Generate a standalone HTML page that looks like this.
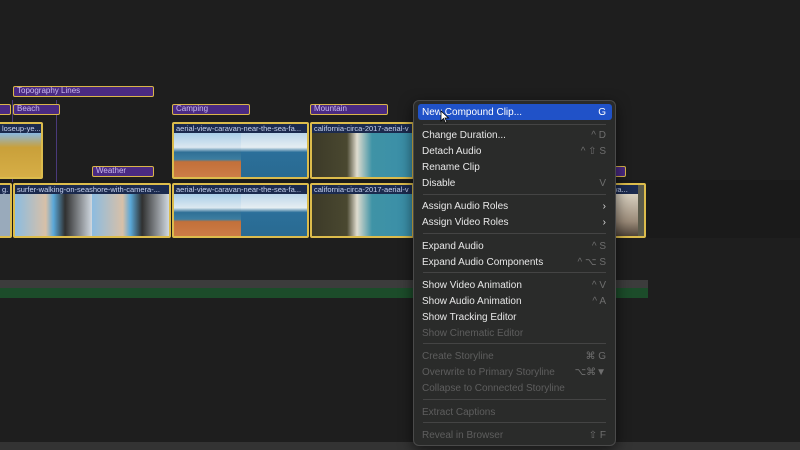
<!DOCTYPE html>
<html><head><style>
*{margin:0;padding:0;box-sizing:border-box}
body{width:800px;height:450px;background:#1e1e1e;position:relative;overflow:hidden;font-family:"Liberation Sans",sans-serif}
.a{position:absolute}
.lab{position:absolute;height:11px;background:#4a2a82;border:1.5px solid #d9b54a;border-radius:2px;color:#c9b8f0;font-size:8px;line-height:8px;height:11px;padding-left:3px;white-space:nowrap;overflow:hidden}
.clip{position:absolute;border:2px solid #dcbc4c;border-radius:2px;overflow:hidden;background:#333}
.clip .t{height:9px;background:#1b2a4e;color:#c8d4f0;font-size:7.5px;line-height:9px;padding-left:2px;white-space:nowrap;overflow:hidden}
.beach{background:linear-gradient(#a9cde8 0%,#dce8f0 30%,#2f6f96 40%,#3d7ea0 55%,#c2703a 60%,#d0804a 100%)}
.sea{background:linear-gradient(#bcd6ea 0%,#e6eef2 30%,#2b6f9a 40%,#2a6a90 100%)}
.cal{background:linear-gradient(90deg,#3c3a28 0%,#4a4830 35%,#e0dccf 45%,#3f93a6 60%,#3a8ea8 100%)}
.surf{background:linear-gradient(90deg,#8cbce0 0%,#d8c0a8 40%,#5aa8d8 50%,#303030 65%,#d0d8e0 100%)}
.menu{position:absolute;left:413px;top:100px;width:203px;height:346px;background:#2a2b2a;border:1px solid #4a4a4a;border-radius:6px;box-shadow:0 4px 14px rgba(0,0,0,.6)}
.it{position:absolute;left:8px;font-size:10px;color:#e8e8e8;white-space:nowrap;margin-top:1px}
.k{position:absolute;right:9px;font-size:10px;color:#6e6e6e;white-space:nowrap;margin-top:1px}
.d{color:#5e5e5e}
.sep{position:absolute;left:9px;right:9px;height:1px;background:#444}
</style></head><body>
<div class="a" style="left:0;top:180px;width:800px;height:58px;background:#1a1a1a"></div>
<div class="a" style="left:0;top:280px;width:648px;height:8px;background:#3c3c3c"></div>
<div class="a" style="left:0;top:288px;width:648px;height:10px;background:#1c4c2a"></div>
<div class="a" style="left:0;top:442px;width:800px;height:8px;background:#333"></div>
<div class="a" style="left:56px;top:100px;width:1px;height:82px;background:#4a3a7a"></div>
<div class="a" style="left:12px;top:100px;width:1px;height:82px;background:#4a3a7a"></div>

<div class="lab" style="left:13px;top:86px;width:141px">Topography Lines</div>
<div class="lab" style="left:-3px;top:104px;width:14px"></div>
<div class="lab" style="left:13px;top:104px;width:47px">Beach</div>
<div class="lab" style="left:172px;top:104px;width:78px">Camping</div>
<div class="lab" style="left:310px;top:104px;width:78px">Mountain</div>
<div class="lab" style="left:92px;top:166px;width:62px">Weather</div>
<div class="lab" style="left:612px;top:166px;width:14px"></div>

<div class="clip" style="left:-2px;top:122px;width:45px;height:57px"><div class="t">loseup-ye...</div><div style="height:48px;background:linear-gradient(#8ab8e0,#c9a03a 30%,#d8b048 100%)"></div></div>
<div class="clip" style="left:172px;top:122px;width:137px;height:57px"><div class="t">aerial-view-caravan-near-the-sea-fa...</div><div style="display:flex;height:48px"><div class="beach" style="flex:1"></div><div class="sea" style="flex:1"></div></div></div>
<div class="clip" style="left:310px;top:122px;width:104px;height:57px"><div class="t">california-circa-2017-aerial-v</div><div class="cal" style="height:48px"></div></div>

<div class="clip" style="left:-2px;top:183px;width:14px;height:55px"><div class="t">g.</div><div style="height:46px;background:#9ab"></div></div>
<div class="clip" style="left:13px;top:183px;width:158px;height:55px"><div class="t">surfer-walking-on-seashore-with-camera-...</div><div style="display:flex;height:46px"><div class="surf" style="flex:1"></div><div class="surf" style="flex:1"></div></div></div>
<div class="clip" style="left:172px;top:183px;width:137px;height:55px"><div class="t">aerial-view-caravan-near-the-sea-fa...</div><div style="display:flex;height:46px"><div class="beach" style="flex:1"></div><div class="sea" style="flex:1"></div></div></div>
<div class="clip" style="left:310px;top:183px;width:104px;height:55px"><div class="t">california-circa-2017-aerial-v</div><div class="cal" style="height:46px"></div></div>
<div class="clip" style="left:608px;top:183px;width:38px;height:55px;background:#5a5a4a"><div class="t" style="width:28px">wa...</div><div style="width:28px;height:46px;background:linear-gradient(#d8d0c0,#9a8a78 60%,#3a3028)"></div></div>

<div class="menu">
<div class="a" style="left:4px;top:3px;width:194px;height:16px;background:#2052c8;border-radius:3px"></div>
<div class="it" style="top:5px;color:#fff">New Compound Clip...</div><div class="k" style="top:5px;color:#fff">G</div>
<div class="sep" style="top:23px"></div>
<div class="it" style="top:28px">Change Duration...</div><div class="k" style="top:28px">^ D</div>
<div class="it" style="top:44px">Detach Audio</div><div class="k" style="top:44px">^ ⇧ S</div>
<div class="it" style="top:60px">Rename Clip</div>
<div class="it" style="top:76px">Disable</div><div class="k" style="top:76px">V</div>
<div class="sep" style="top:93px"></div>
<div class="it" style="top:99px">Assign Audio Roles</div><div class="k" style="top:99px;color:#ddd">›</div>
<div class="it" style="top:115px">Assign Video Roles</div><div class="k" style="top:115px;color:#ddd">›</div>
<div class="sep" style="top:132px"></div>
<div class="it" style="top:139px">Expand Audio</div><div class="k" style="top:139px">^ S</div>
<div class="it" style="top:155px">Expand Audio Components</div><div class="k" style="top:155px">^ ⌥ S</div>
<div class="sep" style="top:171px"></div>
<div class="it" style="top:178px">Show Video Animation</div><div class="k" style="top:178px">^ V</div>
<div class="it" style="top:194px">Show Audio Animation</div><div class="k" style="top:194px">^ A</div>
<div class="it" style="top:210px">Show Tracking Editor</div>
<div class="it d" style="top:226px">Show Cinematic Editor</div>
<div class="sep" style="top:242px"></div>
<div class="it d" style="top:249px">Create Storyline</div><div class="k" style="top:249px">⌘ G</div>
<div class="it d" style="top:265px">Overwrite to Primary Storyline</div><div class="k" style="top:265px">⌥⌘▼</div>
<div class="it d" style="top:281px">Collapse to Connected Storyline</div>
<div class="sep" style="top:298px"></div>
<div class="it d" style="top:305px">Extract Captions</div>
<div class="sep" style="top:321px"></div>
<div class="it d" style="top:328px">Reveal in Browser</div><div class="k" style="top:328px">⇧ F</div>
</div>
<svg class="a" style="left:440px;top:110px" width="10" height="14" viewBox="0 0 10 14"><path d="M1 1 L1 11 L3.5 8.5 L5.5 13 L7 12.3 L5 8 L8.5 8 Z" fill="#fff" stroke="#000" stroke-width="0.8"/></svg>
</body></html>
